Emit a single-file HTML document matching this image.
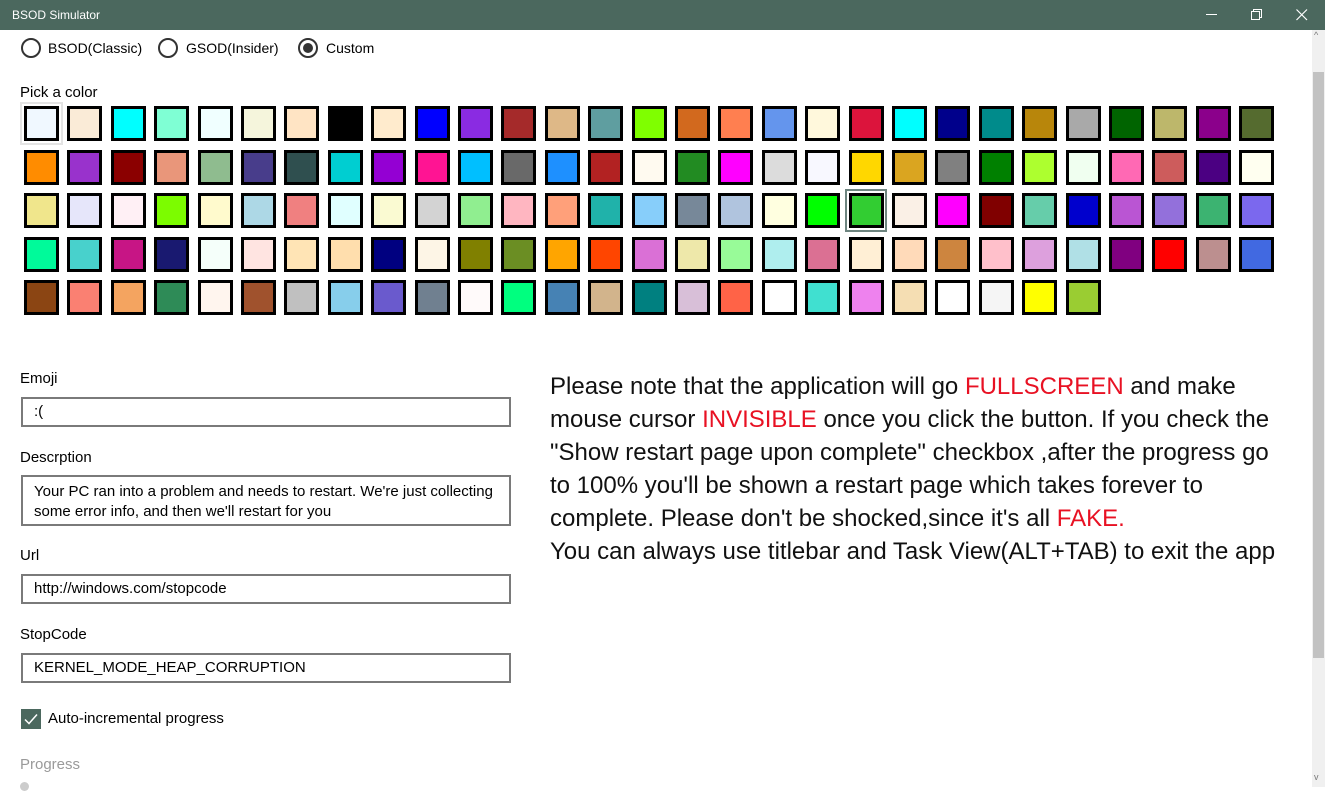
<!DOCTYPE html>
<html><head><meta charset="utf-8"><style>
*{box-sizing:border-box;margin:0;padding:0}
body{width:1325px;height:787px;overflow:hidden;background:#fff;font-family:"Liberation Sans",sans-serif;color:#000;position:relative}
.tb{position:absolute;left:0;top:0;width:1325px;height:30px;background:#4b685e;color:#fff;font-size:12px;line-height:30px;padding-left:12px}
.tb svg{position:absolute;top:9px}
.t{position:absolute;font-size:15px;white-space:nowrap}
.radio{position:absolute;top:38px;width:20px;height:20px;border:2px solid #333;border-radius:50%}
.radio.on::after{content:"";position:absolute;left:3px;top:3px;width:10px;height:10px;border-radius:50%;background:#333}
.sw{position:absolute;width:35px;height:35px;border:3px solid #000}
.box{position:absolute;left:21px;width:490px;border:2px solid #7a7a7a;font-size:15px;padding:0 11px}
.big{position:absolute;left:550px;top:370px;width:745px;font-size:24px;line-height:33px;color:#111}
.r{color:#e81123}
</style></head><body>
<div class="tb">BSOD Simulator
<svg style="left:1206px" width="12" height="12"><line x1="0" y1="5.5" x2="11" y2="5.5" stroke="#fff" stroke-width="1"/></svg>
<svg style="left:1251px" width="12" height="12"><rect x="0.5" y="2.5" width="8" height="8" fill="none" stroke="#fff"/><path d="M2.5 2.5V0.5H10.5V8.5H8.5" fill="none" stroke="#fff"/></svg>
<svg style="left:1296px" width="12" height="12"><path d="M0.5 0.5L11 11M11 0.5L0.5 11" stroke="#fff" stroke-width="1.2"/></svg>
</div>
<div class="radio" style="left:21px"></div><div class="t" style="left:48px;top:40px;font-size:14px">BSOD(Classic)</div>
<div class="radio" style="left:158px"></div><div class="t" style="left:186px;top:40px;font-size:14px">GSOD(Insider)</div>
<div class="radio on" style="left:298px"></div><div class="t" style="left:326px;top:40px;font-size:14px">Custom</div>
<div class="t" style="left:20px;top:84px">Pick a color</div>
<div style="position:absolute;left:20px;top:102px;width:43px;height:43px;border:2px solid #e4e4e4"></div>
<div style="position:absolute;left:845px;top:189px;width:42px;height:43px;border:2px solid #6e8580"></div>
<div id="g"></div>
<div class="t" style="left:20px;top:370px">Emoji</div>
<div class="box" style="top:397px;height:30px;line-height:26px">:(</div>
<div class="t" style="left:20px;top:449px">Descrption</div>
<div class="box" style="top:475px;height:51px;line-height:20px;padding-top:5px">Your PC ran into a problem and needs to restart. We're just collecting some error info, and then we'll restart for you</div>
<div class="t" style="left:20px;top:547px">Url</div>
<div class="box" style="top:574px;height:30px;line-height:26px">http://windows.com/stopcode</div>
<div class="t" style="left:20px;top:626px">StopCode</div>
<div class="box" style="top:653px;height:30px;line-height:26px">KERNEL_MODE_HEAP_CORRUPTION</div>
<div style="position:absolute;left:21px;top:709px;width:20px;height:20px;background:#4b685e"><svg width="20" height="20"><path d="M4 10.5L8 14.5L16 5.5" fill="none" stroke="#fff" stroke-width="1.5"/></svg></div>
<div class="t" style="left:48px;top:710px">Auto-incremental progress</div>
<div class="t" style="left:20px;top:756px;color:#9a9a9a">Progress</div>
<div style="position:absolute;left:20px;top:782px;width:9px;height:9px;border-radius:50%;background:#ccc"></div>
<div class="big">Please note that the application will go <span class="r">FULLSCREEN</span> and make mouse cursor <span class="r">INVISIBLE</span> once you click the button. If you check the "Show restart page upon complete" checkbox ,after the progress go to 100% you'll be shown a restart page which takes forever to complete. Please don't be shocked,since it's all <span class="r">FAKE.</span><br>You can always use titlebar and Task View(ALT+TAB) to exit the app</div>
<div style="position:absolute;left:1312px;top:30px;width:13px;height:757px;background:#f0f0f0"></div>
<div style="position:absolute;left:1313px;top:72px;width:11px;height:586px;background:#c2c2c2"></div>
<div class="t" style="left:1314px;top:30px;font-size:9px;color:#777">^</div>
<div class="t" style="left:1314px;top:772px;font-size:9px;color:#777">v</div>
<script>
var c="F0F8FF FAEBD7 00FFFF 7FFFD4 F0FFFF F5F5DC FFE4C4 000000 FFEBCD 0000FF 8A2BE2 A52A2A DEB887 5F9EA0 7FFF00 D2691E FF7F50 6495ED FFF8DC DC143C 00FFFF 00008B 008B8B B8860B A9A9A9 006400 BDB76B 8B008B 556B2F FF8C00 9932CC 8B0000 E9967A 8FBC8F 483D8B 2F4F4F 00CED1 9400D3 FF1493 00BFFF 696969 1E90FF B22222 FFFAF0 228B22 FF00FF DCDCDC F8F8FF FFD700 DAA520 808080 008000 ADFF2F F0FFF0 FF69B4 CD5C5C 4B0082 FFFFF0 F0E68C E6E6FA FFF0F5 7CFC00 FFFACD ADD8E6 F08080 E0FFFF FAFAD2 D3D3D3 90EE90 FFB6C1 FFA07A 20B2AA 87CEFA 778899 B0C4DE FFFFE0 00FF00 32CD32 FAF0E6 FF00FF 800000 66CDAA 0000CD BA55D3 9370DB 3CB371 7B68EE 00FA9A 48D1CC C71585 191970 F5FFFA FFE4E1 FFE4B5 FFDEAD 000080 FDF5E6 808000 6B8E23 FFA500 FF4500 DA70D6 EEE8AA 98FB98 AFEEEE DB7093 FFEFD5 FFDAB9 CD853F FFC0CB DDA0DD B0E0E6 800080 FF0000 BC8F8F 4169E1 8B4513 FA8072 F4A460 2E8B57 FFF5EE A0522D C0C0C0 87CEEB 6A5ACD 708090 FFFAFA 00FF7F 4682B4 D2B48C 008080 D8BFD8 FF6347 FFFFFF 40E0D0 EE82EE F5DEB3 FFFFFF F5F5F5 FFFF00 9ACD32".split(" ");
var h="";c.forEach(function(x,i){var col=i%29,row=Math.floor(i/29);h+='<div class="sw" style="left:'+(24+col*43.4).toFixed(1)+'px;top:'+(106+row*43.5).toFixed(1)+'px;background:#'+x+'"></div>';});
document.getElementById("g").innerHTML=h;
</script>
</body></html>
